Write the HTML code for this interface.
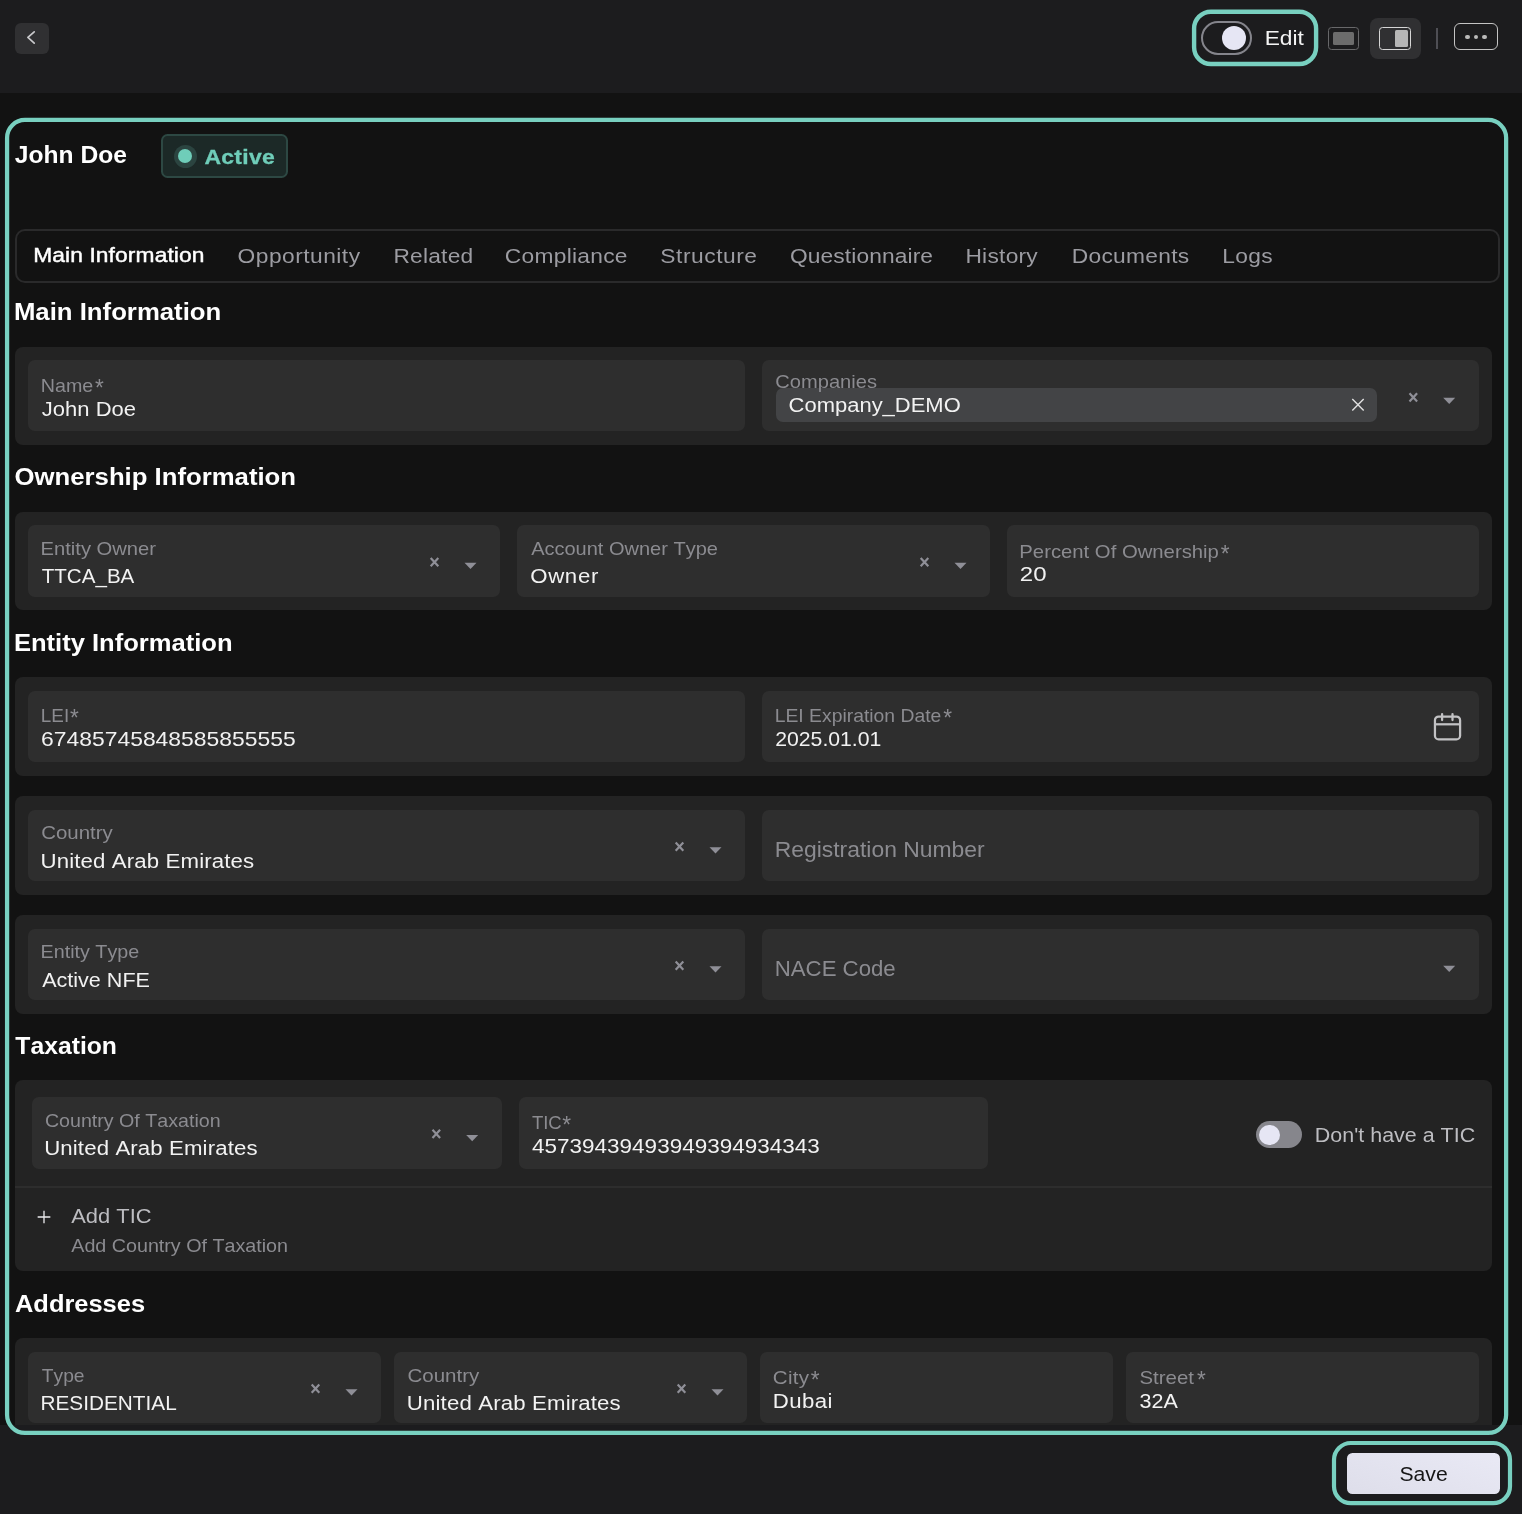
<!DOCTYPE html>
<html><head><meta charset="utf-8"><title>John Doe</title>
<style>
html,body{margin:0;padding:0;}
body{width:1522px;height:1514px;overflow:hidden;background:#121212;font-family:"Liberation Sans",sans-serif;position:relative;}
.a{position:absolute;display:block;}
.t{white-space:nowrap;font-kerning:none;transform-origin:0 50%;}
</style></head><body>
<div class="a" style="left:0;top:0;width:1522px;height:1514px;will-change:transform;">
<div class="a" style="left:0.00px;top:0.00px;width:1522.00px;height:93.00px;background:#1c1c1e;"></div>
<div class="a" style="left:0.00px;top:1425.00px;width:1522.00px;height:89.00px;background:#1c1c1e;"></div>
<div class="a" style="left:15.00px;top:23.00px;width:34.00px;height:31.00px;background:#303032;border-radius:6px;"></div>
<svg class="a" style="left:15px;top:23px" width="34" height="31" viewBox="0 0 34 31"><path d="M19.2 8.8 L12.9 14.45 L19.2 20.1" fill="none" stroke="#c9c9cc" stroke-width="1.7" stroke-linecap="round" stroke-linejoin="round"/></svg>
<div class="a" style="left:1200.70px;top:20.90px;width:51.50px;height:34.10px;border-radius:17.5px;border:2px solid #85858c;box-sizing:border-box;"></div>
<div class="a" style="left:1221.90px;top:25.80px;width:24.60px;height:24.50px;background:#e6e6f4;border-radius:13px;"></div>
<span class="a t" style="left:1264px;top:25.25px;font-size:21px;line-height:25px;color:#f4f4f4;letter-spacing:0.000px;transform:translateX(0.63px) scaleX(1.0842);">Edit</span>
<div class="a" style="left:1328.00px;top:26.50px;width:31.00px;height:23.70px;border-radius:3.5px;border:1px solid #68686a;box-sizing:border-box;"></div>
<div class="a" style="left:1333.00px;top:31.70px;width:21.00px;height:13.40px;background:#6c6c6c;border-radius:1.5px;"></div>
<div class="a" style="left:1370.00px;top:18.00px;width:51.00px;height:41.00px;background:#303032;border-radius:8px;"></div>
<div class="a" style="left:1379.00px;top:26.50px;width:32.00px;height:23.70px;border-radius:3.5px;border:1.2px solid #d6d6d6;box-sizing:border-box;"></div>
<div class="a" style="left:1395.00px;top:30.10px;width:13.30px;height:17.00px;background:#b6b6b6;border-radius:1.5px;"></div>
<div class="a" style="left:1436.20px;top:27.70px;width:1.60px;height:21.30px;background:#4e4e54;"></div>
<div class="a" style="left:1453.60px;top:22.70px;width:44.60px;height:27.50px;border-radius:6px;border:1.6px solid #c4c4c4;box-sizing:border-box;"></div>
<div class="a" style="left:1465.00px;top:34.70px;width:4.60px;height:4.60px;background:#bababa;border-radius:3px;"></div>
<div class="a" style="left:1473.50px;top:34.70px;width:4.60px;height:4.60px;background:#bababa;border-radius:3px;"></div>
<div class="a" style="left:1482.00px;top:34.70px;width:4.60px;height:4.60px;background:#bababa;border-radius:3px;"></div>
<span class="a t" style="left:14px;top:140.25px;font-size:24.5px;line-height:29px;color:#ffffff;letter-spacing:-0.000px;transform:translateX(0.83px) scaleX(1.0036);font-weight:700;">John Doe</span>
<div class="a" style="left:161.00px;top:134.40px;width:127.00px;height:43.60px;background:#1c2927;border-radius:6.5px;border:2px solid #2d4843;box-sizing:border-box;"></div>
<div class="a" style="left:173.80px;top:144.50px;width:23.00px;height:23.00px;background:#2b4440;border-radius:12px;"></div>
<div class="a" style="left:178.30px;top:149.00px;width:14.00px;height:14.00px;background:#6fcdb9;border-radius:8px;"></div>
<span class="a t" style="left:204px;top:144.25px;font-size:20.5px;line-height:25px;color:#6fcdb9;letter-spacing:0.258px;transform:translateX(0.43px) scaleX(1.1200);font-weight:700;-webkit-text-stroke:0.3px #6fcdb9;">Active</span>
<div class="a" style="left:15.00px;top:229.00px;width:1485.00px;height:54.00px;border-radius:10px;border:2px solid #2a2a2b;box-sizing:border-box;"></div>
<span class="a t" style="left:33px;top:242.25px;font-size:20.5px;line-height:25px;color:#ffffff;letter-spacing:0.112px;transform:translateX(0.13px) scaleX(1.1100);-webkit-text-stroke:0.45px #ffffff;">Main Information</span>
<span class="a t" style="left:237px;top:243.25px;font-size:20.5px;line-height:25px;color:#9c9ca2;letter-spacing:0.432px;transform:translateX(0.62px) scaleX(1.1100);">Opportunity</span>
<span class="a t" style="left:393px;top:243.25px;font-size:20.5px;line-height:25px;color:#9c9ca2;letter-spacing:0.195px;transform:translateX(0.43px) scaleX(1.1100);">Related</span>
<span class="a t" style="left:504px;top:243.25px;font-size:20.5px;line-height:25px;color:#9c9ca2;letter-spacing:0.252px;transform:translateX(0.84px) scaleX(1.1100);">Compliance</span>
<span class="a t" style="left:660px;top:243.25px;font-size:20.5px;line-height:25px;color:#9c9ca2;letter-spacing:0.498px;transform:translateX(0.27px) scaleX(1.1100);">Structure</span>
<span class="a t" style="left:789px;top:243.25px;font-size:20.5px;line-height:25px;color:#9c9ca2;letter-spacing:0.106px;transform:translateX(0.92px) scaleX(1.1100);">Questionnaire</span>
<span class="a t" style="left:965px;top:243.25px;font-size:20.5px;line-height:25px;color:#9c9ca2;letter-spacing:0.227px;transform:translateX(0.43px) scaleX(1.1100);">History</span>
<span class="a t" style="left:1071px;top:243.25px;font-size:20.5px;line-height:25px;color:#9c9ca2;letter-spacing:0.259px;transform:translateX(0.73px) scaleX(1.1100);">Documents</span>
<span class="a t" style="left:1222px;top:243.25px;font-size:20.5px;line-height:25px;color:#9c9ca2;letter-spacing:0.314px;transform:translateX(0.13px) scaleX(1.1100);">Logs</span>
<span class="a t" style="left:13px;top:298.25px;font-size:23.5px;line-height:28px;color:#ffffff;letter-spacing:-0.000px;transform:translateX(0.88px) scaleX(1.0957);font-weight:700;">Main Information</span>
<span class="a t" style="left:14px;top:463.25px;font-size:23.5px;line-height:28px;color:#ffffff;letter-spacing:-0.000px;transform:translateX(0.55px) scaleX(1.0943);font-weight:700;">Ownership Information</span>
<span class="a t" style="left:13px;top:629.25px;font-size:23.5px;line-height:28px;color:#ffffff;letter-spacing:0.000px;transform:translateX(0.89px) scaleX(1.0878);font-weight:700;">Entity Information</span>
<span class="a t" style="left:15px;top:1032.25px;font-size:23.5px;line-height:28px;color:#ffffff;letter-spacing:0.000px;transform:translateX(0.32px) scaleX(1.0516);font-weight:700;">Taxation</span>
<span class="a t" style="left:14px;top:1290.25px;font-size:23.5px;line-height:28px;color:#ffffff;letter-spacing:0.000px;transform:translateX(0.97px) scaleX(1.0824);font-weight:700;">Addresses</span>
<div class="a" style="left:15.00px;top:347.00px;width:1477.00px;height:98.00px;background:#232323;border-radius:8px;"></div>
<div class="a" style="left:15.00px;top:512.00px;width:1477.00px;height:98.00px;background:#232323;border-radius:8px;"></div>
<div class="a" style="left:15.00px;top:677.00px;width:1477.00px;height:99.00px;background:#232323;border-radius:8px;"></div>
<div class="a" style="left:15.00px;top:796.00px;width:1477.00px;height:99.00px;background:#232323;border-radius:8px;"></div>
<div class="a" style="left:15.00px;top:915.00px;width:1477.00px;height:99.00px;background:#232323;border-radius:8px;"></div>
<div class="a" style="left:15.00px;top:1080.00px;width:1477.00px;height:191.30px;background:#232323;border-radius:8px;"></div>
<div class="a" style="left:15.00px;top:1338.00px;width:1477.00px;height:87.00px;background:#232323;border-radius:8px 8px 0 0;"></div>
<div class="a" style="left:28.00px;top:360.00px;width:717.00px;height:71.00px;background:#2e2e2e;border-radius:7px;"></div>
<span class="a t" style="left:40px;top:374.75px;font-size:18.5px;line-height:22px;color:#8b8b90;letter-spacing:-0.000px;transform:translateX(0.79px) scaleX(1.0636);">Name</span>
<span class="a t" style="left:94px;top:374.25px;font-size:23px;line-height:28px;color:#8b8b90;letter-spacing:0.000px;transform:translateX(0.93px) scaleX(0.9853);">*</span>
<span class="a t" style="left:41px;top:397.25px;font-size:20px;line-height:24px;color:#f2f2f2;letter-spacing:0.000px;transform:translateX(0.86px) scaleX(1.0993);">John Doe</span>
<div class="a" style="left:762.00px;top:360.00px;width:717.00px;height:71.00px;background:#2e2e2e;border-radius:7px;"></div>
<div class="a" style="left:776.30px;top:388.20px;width:601.00px;height:33.80px;background:#434446;border-radius:7px;"></div>
<span class="a t" style="left:775px;top:370.75px;font-size:18.5px;line-height:22px;color:#8b8b90;letter-spacing:-0.000px;transform:translateX(0.28px) scaleX(1.0873);">Companies</span>
<span class="a t" style="left:788px;top:393.25px;font-size:20px;line-height:24px;color:#f2f2f2;letter-spacing:0.000px;transform:translateX(0.58px) scaleX(1.0986);">Company_DEMO</span>
<svg class="a" style="left:1349px;top:396px" width="19" height="19" viewBox="0 0 19 19"><g transform="translate(0.30 0.10)"><path d="M3 3 L14.40 14.40 M14.40 3 L3 14.40" stroke="#e2e2e2" stroke-width="1.4" fill="none"/></g></svg>
<svg class="a" style="left:1406px;top:390px" width="16" height="16" viewBox="0 0 16 16"><g transform="translate(0.50 0.20)"><path d="M3 3 L10.60 11.21 M10.60 3 L3 11.21" stroke="#8f8f97" stroke-width="2.2" fill="none"/></g></svg>
<svg class="a" style="left:1443px;top:397px" width="14" height="8" viewBox="0 0 14 8"><g transform="translate(0.20 0.70)"><path d="M0 0 H12 L6.0 6.2 Z" fill="#8f8f97"/></g></svg>
<div class="a" style="left:28.00px;top:525.00px;width:472.00px;height:72.00px;background:#2e2e2e;border-radius:7px;"></div>
<span class="a t" style="left:40px;top:537.75px;font-size:18.5px;line-height:22px;color:#8b8b90;letter-spacing:0.000px;transform:translateX(0.54px) scaleX(1.0906);">Entity Owner</span>
<span class="a t" style="left:41px;top:564.25px;font-size:20px;line-height:24px;color:#f2f2f2;letter-spacing:-0.000px;transform:translateX(0.74px) scaleX(1.0287);">TTCA_BA</span>
<svg class="a" style="left:427px;top:554px" width="16" height="17" viewBox="0 0 16 17"><g transform="translate(0.70 1.00)"><path d="M3 3 L10.60 11.21 M10.60 3 L3 11.21" stroke="#8f8f97" stroke-width="2.2" fill="none"/></g></svg>
<svg class="a" style="left:464px;top:562px" width="14" height="8" viewBox="0 0 14 8"><g transform="translate(0.50 0.70)"><path d="M0 0 H12 L6.0 6.2 Z" fill="#8f8f97"/></g></svg>
<div class="a" style="left:517.00px;top:525.00px;width:473.00px;height:72.00px;background:#2e2e2e;border-radius:7px;"></div>
<span class="a t" style="left:531px;top:537.75px;font-size:18.5px;line-height:22px;color:#8b8b90;letter-spacing:0.000px;transform:translateX(0.16px) scaleX(1.0810);">Account Owner Type</span>
<span class="a t" style="left:530px;top:564.25px;font-size:20px;line-height:24px;color:#f2f2f2;letter-spacing:0.638px;transform:translateX(0.15px) scaleX(1.1100);">Owner</span>
<svg class="a" style="left:917px;top:554px" width="16" height="17" viewBox="0 0 16 17"><g transform="translate(0.70 1.00)"><path d="M3 3 L10.60 11.21 M10.60 3 L3 11.21" stroke="#8f8f97" stroke-width="2.2" fill="none"/></g></svg>
<svg class="a" style="left:954px;top:562px" width="14" height="8" viewBox="0 0 14 8"><g transform="translate(0.50 0.70)"><path d="M0 0 H12 L6.0 6.2 Z" fill="#8f8f97"/></g></svg>
<div class="a" style="left:1007.00px;top:525.00px;width:472.00px;height:72.00px;background:#2e2e2e;border-radius:7px;"></div>
<span class="a t" style="left:1019px;top:540.75px;font-size:18.5px;line-height:22px;color:#8b8b90;letter-spacing:0.000px;transform:translateX(0.34px) scaleX(1.0963);">Percent Of Ownership</span>
<span class="a t" style="left:1220px;top:540.25px;font-size:23px;line-height:28px;color:#8b8b90;letter-spacing:0.000px;transform:translateX(0.83px) scaleX(0.9853);">*</span>
<span class="a t" style="left:1019px;top:562.25px;font-size:20px;line-height:24px;color:#f2f2f2;letter-spacing:0.124px;transform:translateX(0.79px) scaleX(1.2000);">20</span>
<div class="a" style="left:28.00px;top:691.00px;width:717.00px;height:71.00px;background:#2e2e2e;border-radius:7px;"></div>
<span class="a t" style="left:40px;top:704.75px;font-size:18.5px;line-height:22px;color:#8b8b90;letter-spacing:0.000px;transform:translateX(0.85px) scaleX(1.0186);">LEI</span>
<span class="a t" style="left:70px;top:704.25px;font-size:23px;line-height:28px;color:#8b8b90;letter-spacing:0.000px;transform:translateX(0.03px) scaleX(0.9853);">*</span>
<span class="a t" style="left:41px;top:726.25px;font-size:21px;line-height:25px;color:#f2f2f2;letter-spacing:0.000px;transform:translateX(0.04px) scaleX(1.0901);">67485745848585855555</span>
<div class="a" style="left:762.00px;top:691.00px;width:717.00px;height:71.00px;background:#2e2e2e;border-radius:7px;"></div>
<span class="a t" style="left:774px;top:704.75px;font-size:18.5px;line-height:22px;color:#8b8b90;letter-spacing:0.000px;transform:translateX(0.71px) scaleX(1.0449);">LEI Expiration Date</span>
<span class="a t" style="left:943px;top:704.25px;font-size:23px;line-height:28px;color:#8b8b90;letter-spacing:0.000px;transform:translateX(0.23px) scaleX(0.9853);">*</span>
<span class="a t" style="left:775px;top:726.25px;font-size:21px;line-height:25px;color:#f2f2f2;letter-spacing:0.000px;transform:translateX(0.23px) scaleX(1.0095);">2025.01.01</span>
<svg class="a" style="left:1430px;top:710px" width="36" height="34" viewBox="0 0 36 34"><g fill="none" stroke="#c2c2c4" stroke-width="2.25"><rect x="4.95" y="6.5" width="25.15" height="22.9" rx="3.7"/><path d="M4.95 14.3 H30.1"/><path d="M12.1 4.1 V10 M22.5 4.1 V10" stroke-linecap="round"/></g></svg>
<div class="a" style="left:28.00px;top:810.00px;width:717.00px;height:71.00px;background:#2e2e2e;border-radius:7px;"></div>
<span class="a t" style="left:41px;top:821.75px;font-size:18.5px;line-height:22px;color:#8b8b90;letter-spacing:-0.000px;transform:translateX(0.16px) scaleX(1.1050);">Country</span>
<span class="a t" style="left:40px;top:849.25px;font-size:20px;line-height:24px;color:#f2f2f2;letter-spacing:0.125px;transform:translateX(0.49px) scaleX(1.1100);">United Arab Emirates</span>
<svg class="a" style="left:672px;top:839px" width="16" height="16" viewBox="0 0 16 16"><g transform="translate(0.70 0.50)"><path d="M3 3 L10.60 11.21 M10.60 3 L3 11.21" stroke="#8f8f97" stroke-width="2.2" fill="none"/></g></svg>
<svg class="a" style="left:709px;top:847px" width="14" height="8" viewBox="0 0 14 8"><g transform="translate(0.50 0.20)"><path d="M0 0 H12 L6.0 6.2 Z" fill="#8f8f97"/></g></svg>
<div class="a" style="left:762.00px;top:810.00px;width:717.00px;height:71.00px;background:#2e2e2e;border-radius:7px;"></div>
<span class="a t" style="left:774px;top:837.25px;font-size:21.5px;line-height:26px;color:#8b8b90;letter-spacing:0.000px;transform:translateX(0.72px) scaleX(1.0649);">Registration Number</span>
<div class="a" style="left:28.00px;top:929.00px;width:717.00px;height:71.00px;background:#2e2e2e;border-radius:7px;"></div>
<span class="a t" style="left:40px;top:940.75px;font-size:18.5px;line-height:22px;color:#8b8b90;letter-spacing:0.000px;transform:translateX(0.58px) scaleX(1.0655);">Entity Type</span>
<span class="a t" style="left:42px;top:968.25px;font-size:20px;line-height:24px;color:#f2f2f2;letter-spacing:0.000px;transform:translateX(0.16px) scaleX(1.0775);">Active NFE</span>
<svg class="a" style="left:672px;top:958px" width="16" height="16" viewBox="0 0 16 16"><g transform="translate(0.70 0.50)"><path d="M3 3 L10.60 11.21 M10.60 3 L3 11.21" stroke="#8f8f97" stroke-width="2.2" fill="none"/></g></svg>
<svg class="a" style="left:709px;top:966px" width="14" height="8" viewBox="0 0 14 8"><g transform="translate(0.50 0.20)"><path d="M0 0 H12 L6.0 6.2 Z" fill="#8f8f97"/></g></svg>
<div class="a" style="left:762.00px;top:929.00px;width:717.00px;height:71.00px;background:#2e2e2e;border-radius:7px;"></div>
<span class="a t" style="left:774px;top:956.25px;font-size:21.5px;line-height:26px;color:#8b8b90;letter-spacing:0.000px;transform:translateX(0.78px) scaleX(1.0325);">NACE Code</span>
<svg class="a" style="left:1443px;top:965px" width="14" height="8" viewBox="0 0 14 8"><g transform="translate(0.20 0.70)"><path d="M0 0 H12 L6.0 6.2 Z" fill="#8f8f97"/></g></svg>
<div class="a" style="left:32.00px;top:1097.00px;width:470.30px;height:72.00px;background:#2e2e2e;border-radius:7px;"></div>
<span class="a t" style="left:44px;top:1109.75px;font-size:18.5px;line-height:22px;color:#8b8b90;letter-spacing:0.000px;transform:translateX(0.90px) scaleX(1.0612);">Country Of Taxation</span>
<span class="a t" style="left:44px;top:1136.25px;font-size:20px;line-height:24px;color:#f2f2f2;letter-spacing:0.110px;transform:translateX(0.19px) scaleX(1.1100);">United Arab Emirates</span>
<svg class="a" style="left:429px;top:1126px" width="16" height="16" viewBox="0 0 16 16"><g transform="translate(0.50 0.70)"><path d="M3 3 L10.60 11.21 M10.60 3 L3 11.21" stroke="#8f8f97" stroke-width="2.2" fill="none"/></g></svg>
<svg class="a" style="left:466px;top:1135px" width="14" height="8" viewBox="0 0 14 8"><g transform="translate(0.20 0.00)"><path d="M0 0 H12 L6.0 6.2 Z" fill="#8f8f97"/></g></svg>
<div class="a" style="left:519.00px;top:1097.00px;width:469.00px;height:72.00px;background:#2e2e2e;border-radius:7px;"></div>
<span class="a t" style="left:531px;top:1111.75px;font-size:18.5px;line-height:22px;color:#8b8b90;letter-spacing:-0.083px;transform:translateX(0.88px) scaleX(1.0030);">TIC</span>
<span class="a t" style="left:562px;top:1111.25px;font-size:23px;line-height:28px;color:#8b8b90;letter-spacing:0.000px;transform:translateX(0.13px) scaleX(0.9853);">*</span>
<span class="a t" style="left:532px;top:1133.25px;font-size:21px;line-height:25px;color:#f2f2f2;letter-spacing:0.000px;transform:translateX(0.08px) scaleX(1.0707);">45739439493949394934343</span>
<div class="a" style="left:1256.30px;top:1121.00px;width:45.70px;height:27.00px;background:#86868c;border-radius:14px;"></div>
<div class="a" style="left:1258.90px;top:1124.60px;width:21.20px;height:20.40px;background:#e6e6f4;border-radius:11px;"></div>
<span class="a t" style="left:1314px;top:1123.25px;font-size:20px;line-height:24px;color:#bdbdc1;letter-spacing:0.000px;transform:translateX(0.84px) scaleX(1.0725);">Don't have a TIC</span>
<div class="a" style="left:15.00px;top:1186.30px;width:1477.00px;height:1.40px;background:#2d2d2d;"></div>
<svg class="a" style="left:35.7px;top:1209px" width="16" height="16" viewBox="0 0 16 16"><path d="M8 1.65 V14.35 M1.65 8 H14.35" stroke="#ececee" stroke-width="1.3" fill="none"/></svg>
<span class="a t" style="left:71px;top:1204.25px;font-size:20px;line-height:24px;color:#bcbcc0;letter-spacing:0.000px;transform:translateX(0.26px) scaleX(1.0943);">Add TIC</span>
<span class="a t" style="left:71px;top:1234.75px;font-size:18.5px;line-height:22px;color:#8b8b90;letter-spacing:0.000px;transform:translateX(0.26px) scaleX(1.0644);">Add Country Of Taxation</span>
<div class="a" style="left:28.00px;top:1352.00px;width:353.00px;height:71.00px;background:#2e2e2e;border-radius:7px;"></div>
<span class="a t" style="left:41px;top:1364.75px;font-size:18.5px;line-height:22px;color:#8b8b90;letter-spacing:0.000px;transform:translateX(0.77px) scaleX(1.0403);">Type</span>
<span class="a t" style="left:40px;top:1391.25px;font-size:20px;line-height:24px;color:#f2f2f2;letter-spacing:0.000px;transform:translateX(0.50px) scaleX(1.0385);">RESIDENTIAL</span>
<svg class="a" style="left:308px;top:1381px" width="16" height="16" viewBox="0 0 16 16"><g transform="translate(0.70 0.50)"><path d="M3 3 L10.60 11.21 M10.60 3 L3 11.21" stroke="#8f8f97" stroke-width="2.2" fill="none"/></g></svg>
<svg class="a" style="left:345px;top:1389px" width="14" height="8" viewBox="0 0 14 8"><g transform="translate(0.50 0.20)"><path d="M0 0 H12 L6.0 6.2 Z" fill="#8f8f97"/></g></svg>
<div class="a" style="left:394.30px;top:1352.00px;width:352.70px;height:71.00px;background:#2e2e2e;border-radius:7px;"></div>
<span class="a t" style="left:407px;top:1364.75px;font-size:18.5px;line-height:22px;color:#8b8b90;letter-spacing:0.000px;transform:translateX(0.46px) scaleX(1.1097);">Country</span>
<span class="a t" style="left:406px;top:1391.25px;font-size:20px;line-height:24px;color:#f2f2f2;letter-spacing:0.139px;transform:translateX(0.79px) scaleX(1.1100);">United Arab Emirates</span>
<svg class="a" style="left:674px;top:1381px" width="16" height="16" viewBox="0 0 16 16"><g transform="translate(0.70 0.50)"><path d="M3 3 L10.60 11.21 M10.60 3 L3 11.21" stroke="#8f8f97" stroke-width="2.2" fill="none"/></g></svg>
<svg class="a" style="left:711px;top:1389px" width="14" height="8" viewBox="0 0 14 8"><g transform="translate(0.50 0.20)"><path d="M0 0 H12 L6.0 6.2 Z" fill="#8f8f97"/></g></svg>
<div class="a" style="left:760.30px;top:1352.00px;width:352.70px;height:71.00px;background:#2e2e2e;border-radius:7px;"></div>
<span class="a t" style="left:772px;top:1366.75px;font-size:18.5px;line-height:22px;color:#8b8b90;letter-spacing:0.261px;transform:translateX(0.86px) scaleX(1.1100);">City</span>
<span class="a t" style="left:810px;top:1366.25px;font-size:23px;line-height:28px;color:#8b8b90;letter-spacing:0.000px;transform:translateX(0.83px) scaleX(0.9853);">*</span>
<span class="a t" style="left:772px;top:1389.25px;font-size:20px;line-height:24px;color:#f2f2f2;letter-spacing:0.386px;transform:translateX(0.78px) scaleX(1.1100);">Dubai</span>
<div class="a" style="left:1126.00px;top:1352.00px;width:352.50px;height:71.00px;background:#2e2e2e;border-radius:7px;"></div>
<span class="a t" style="left:1139px;top:1366.75px;font-size:18.5px;line-height:22px;color:#8b8b90;letter-spacing:0.000px;transform:translateX(0.47px) scaleX(1.1037);">Street</span>
<span class="a t" style="left:1196px;top:1366.25px;font-size:23px;line-height:28px;color:#8b8b90;letter-spacing:0.000px;transform:translateX(0.93px) scaleX(0.9853);">*</span>
<span class="a t" style="left:1139px;top:1389.25px;font-size:20px;line-height:24px;color:#f2f2f2;letter-spacing:0.000px;transform:translateX(0.48px) scaleX(1.0752);">32A</span>
<svg class="a" style="left:0;top:0" width="1522" height="1514" viewBox="0 0 1522 1514"><g fill="none" stroke="#78d0c0"><rect x="7.08" y="119.97" width="1499.05" height="1312.90" rx="17.88" stroke-width="4.25"/><rect x="1194.10" y="11.76" width="122.00" height="52.24" rx="16.80" stroke-width="4.4"/><rect x="1334.00" y="1443.00" width="176.00" height="60.10" rx="16.90" stroke-width="4.2"/></g></svg>
<div class="a" style="left:1347.00px;top:1453.00px;width:153.30px;height:41.10px;border-radius:5.5px;background:linear-gradient(200deg,#e9e9f5,#dedeea);"></div>
<span class="a t" style="left:1399px;top:1461.25px;font-size:20.5px;line-height:25px;color:#161616;letter-spacing:0.000px;transform:translateX(0.44px) scaleX(1.0338);">Save</span>
</div>
</body></html>
